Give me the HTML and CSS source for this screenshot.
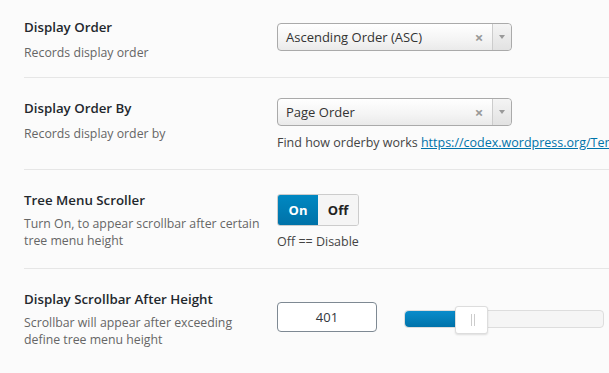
FILE: index.html
```html
<!DOCTYPE html>
<html lang="en">
<head>
  <meta charset="UTF-8">
  <title>Tree Menu Settings</title>
  <link rel="stylesheet" href="styles.css">
</head>
<body>
  <div class="settings">
    <div class="row row-order">
      <div class="label">
        <h3>Display Order</h3>
        <p>Records display order</p>
      </div>
      <div class="field">
        <div class="select">
          <span class="select-text">Ascending Order (ASC)</span>
          <span class="select-clear">×</span>
          <span class="select-arrow"></span>
        </div>
      </div>
    </div>

    <div class="row row-orderby">
      <div class="label">
        <h3>Display Order By</h3>
        <p>Records display order by</p>
      </div>
      <div class="field">
        <div class="select">
          <span class="select-text">Page Order</span>
          <span class="select-clear">×</span>
          <span class="select-arrow"></span>
        </div>
        <p class="help">Find how orderby works <a href="#">https://codex.wordpress.org/Template_Tags/wp_list_pages</a></p>
      </div>
    </div>

    <div class="row row-scroller">
      <div class="label">
        <h3>Tree Menu Scroller</h3>
        <p>Turn On, to appear scrollbar after certain tree menu height</p>
      </div>
      <div class="field">
        <div class="toggle">
          <span class="toggle-on">On</span>
          <span class="toggle-off">Off</span>
        </div>
        <p class="help">Off == Disable</p>
      </div>
    </div>

    <div class="row row-height">
      <div class="label">
        <h3>Display Scrollbar After Height</h3>
        <p>Scrollbar will appear after exceeding define tree menu height</p>
      </div>
      <div class="field field-inline">
        <input class="number" value="401">
        <div class="slider">
          <div class="slider-range" style="width: 28%"></div>
          <div class="slider-handle" style="left: 25%"></div>
        </div>
      </div>
    </div>
  </div>
</body>
</html>
```

FILE: styles.css
```css
body { margin: 0; background: #fbfbfb; font-family: "Open Sans", "Noto Sans", sans-serif; color: #444; overflow: hidden; }
.settings { padding-left: 24px; width: 640px; }
.row { display: grid; grid-template-columns: 253px 1fr; align-items: start; border-bottom: 1px solid #e6e6e6; }
.row-order { height: 78px; box-sizing: border-box; padding-top: 17px; }
.row-orderby { padding: 20px 0 18px; }
.row-scroller { padding: 20px 0 18px; }
.row-height { padding: 20px 0 20px; border-bottom: none; }

.label h3 { margin: 0; font-size: 13.3px; font-weight: 600; line-height: 20px; color: #23282d; }
.label p { margin: 8px 0 0; font-size: 12.3px; line-height: 16px; color: #666; width: 240px; }
.row-scroller .label p, .row-height .label p { margin-top: 6px; line-height: 16.5px; }

.field { padding-top: 6px; }
.row-orderby .field { padding-top: 0; }
.row-scroller .field { padding-top: 4px; }
.row-height .field { padding-top: 13px; }

.select { display: flex; align-items: center; width: 233px; height: 26px; border: 1px solid #aaa; border-radius: 4px; background: linear-gradient(#fff, #f4f4f4 60%, #eaeaea); }
.select-text { flex: 1; padding-left: 8px; font-size: 13px; color: #333; }
.select-clear { width: 14px; margin-right: 6px; font-size: 15px; font-weight: bold; color: #999; text-align: center; }
.select-arrow { position: relative; width: 18px; height: 100%; border-left: 1px solid #ccc; border-radius: 0 4px 4px 0; background: linear-gradient(#f4f4f4, #e2e2e2); }
.select-arrow::after { content: ""; position: absolute; left: 6px; top: 11px; border: 3px solid transparent; border-top: 4px solid #999; }

.help { margin: 9px 0 0; font-size: 12.5px; line-height: 16px; color: #444; white-space: nowrap; }
.help a { color: #0073aa; }

.toggle { display: inline-flex; height: 30px; border: 1px solid #ccc; border-radius: 3px; overflow: hidden; font-size: 13px; font-weight: 700; }
.toggle span { display: flex; align-items: center; justify-content: center; }
.toggle-on { width: 40px; color: #fff; background: linear-gradient(#0088c2, #0072a8); }
.toggle-off { width: 40px; color: #222; background: #f5f5f5; }
.row-scroller .help { margin-top: 8px; }

.field-inline { display: flex; align-items: center; gap: 27px; }
.number { box-sizing: border-box; width: 100px; height: 30px; margin: 0; padding: 0; border: 1px solid #7e8993; border-radius: 4px; background: #fff; font: 13px "Open Sans", sans-serif; color: #32373c; text-align: center; }
.slider { position: relative; width: 198px; height: 16px; margin-top: 3px; border: 1px solid #ddd; border-radius: 4px; background: #f5f5f5; }
.slider-range { height: 100%; border-radius: 4px 0 0 4px; background: linear-gradient(#0a8ccb, #0073aa); }
.slider-handle { position: absolute; top: -5px; width: 31px; height: 26px; border: 1px solid #ddd; border-radius: 3px; background: #fff; box-shadow: 0 1px 2px rgba(0,0,0,0.12); }
.slider-handle::before, .slider-handle::after { content: ""; position: absolute; top: 7px; width: 1px; height: 12px; background: #ccc; }
.slider-handle::before { left: 15px; }
.slider-handle::after { left: 18px; }
```
